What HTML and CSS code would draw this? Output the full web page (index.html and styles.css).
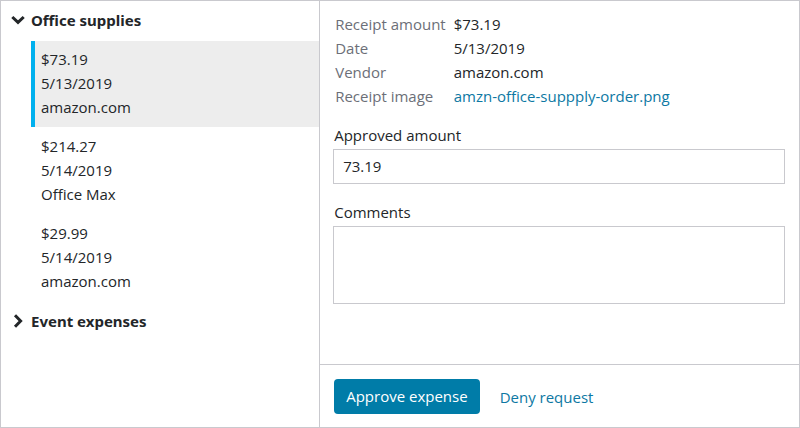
FILE: index.html
```html
<!DOCTYPE html>
<html lang="en">
<head>
<meta charset="utf-8">
<title>Expense approval</title>
<meta name="viewport" content="width=device-width, initial-scale=1">
<link rel="stylesheet" href="styles.css">
</head>
<body>
<main class="panel">
  <nav class="sidebar">
    <button class="group" type="button" aria-expanded="true">
      <svg class="chevron" viewBox="0 0 14 14" aria-hidden="true"><path d="M1.3 4 7 9.4 12.7 4"/></svg>
      <span>Office supplies</span>
    </button>
    <ul class="expenses">
      <li class="expense selected"><span>$73.19</span><span>5/13/2019</span><span>amazon.com</span></li>
      <li class="expense"><span>$214.27</span><span>5/14/2019</span><span>Office Max</span></li>
      <li class="expense"><span>$29.99</span><span>5/14/2019</span><span>amazon.com</span></li>
    </ul>
    <button class="group" type="button" aria-expanded="false">
      <svg class="chevron" viewBox="0 0 14 14" aria-hidden="true"><path d="M4 1.3 9.6 7 4 12.7"/></svg>
      <span>Event expenses</span>
    </button>
  </nav>
  <form class="detail">
    <div class="content">
      <dl class="facts">
        <dt>Receipt amount</dt><dd>$73.19</dd>
        <dt>Date</dt><dd>5/13/2019</dd>
        <dt>Vendor</dt><dd>amazon.com</dd>
        <dt>Receipt image</dt><dd><a href="#">amzn-office-suppply-order.png</a></dd>
      </dl>
      <div class="field">
        <label for="approved">Approved amount</label>
        <input id="approved" type="text" value="73.19">
      </div>
      <div class="field">
        <label for="comments">Comments</label>
        <textarea id="comments"></textarea>
      </div>
    </div>
    <footer class="actions">
      <button class="primary" type="button">Approve expense</button>
      <a href="#">Deny request</a>
    </footer>
  </form>
</main>
</body>
</html>
```
FILE: styles.css
```css
* {
  box-sizing: border-box;
}

body {
  margin: 0;
  background: #fff;
  color: #232629;
  font: 15px/24px "Open Sans", "Noto Sans", sans-serif;
}

button,
input,
textarea {
  color: inherit;
  font: inherit;
}

a {
  color: #0d78a3;
  text-decoration: none;
}

.panel {
  display: grid;
  grid-template-columns: 2fr 3fr;
  min-height: 100vh;
  border: 1px solid #c9c9ce;
}

.sidebar {
  padding-top: 7px;
  border-right: 1px solid #c9c9ce;
}

.group {
  display: flex;
  align-items: center;
  gap: 6px;
  width: 100%;
  padding: 0 10px;
  border: 0;
  background: none;
  font: 700 15px/24px "Noto Sans", sans-serif;
  text-align: left;
}

.chevron {
  width: 14px;
  height: 14px;
  fill: none;
  stroke: currentColor;
  stroke-width: 3;
}

.expenses {
  display: grid;
  gap: 1px;
  margin: 9px 0 8px;
  padding: 0 0 0 30px;
  list-style: none;
}

.expense {
  display: grid;
  padding: 6px 6px 8px;
  border-left: 4px solid transparent;
}

.selected {
  border-color: #00b0ee;
  background: #ededed;
}

.detail {
  display: flex;
  flex-direction: column;
}

.content {
  flex: 1;
  padding: 11px 14px 0 13px;
}

.facts {
  display: grid;
  grid-template-columns: max-content 1fr;
  column-gap: 8px;
  margin: 0 0 15px;
  padding-left: 2px;
}

.facts dt {
  color: #6c6f78;
}

.facts dd {
  margin: 0;
}

.field {
  display: grid;
  gap: 2px;
  margin-bottom: 16px;
}

.field label {
  padding-left: 1px;
}

.field input,
.field textarea {
  width: 100%;
  height: 35px;
  margin: 0;
  padding: 4px 9px 6px;
  border: 1px solid #c9c9ce;
  border-radius: 0;
  background: #fff;
}

.field textarea {
  height: 78px;
  resize: none;
}

.actions {
  display: flex;
  align-items: center;
  gap: 20px;
  padding: 14px 14px 13px;
  border-top: 1px solid #c9c9ce;
}

.primary {
  height: 35px;
  padding: 0 12px 2px;
  border: 0;
  border-radius: 4px;
  background: #007ca8;
  color: #fff;
}
```
